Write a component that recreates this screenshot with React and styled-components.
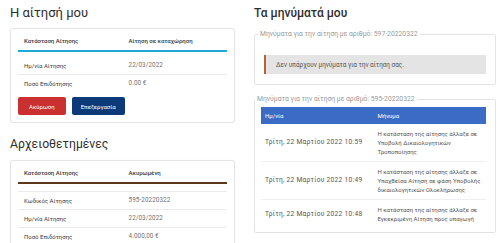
import React from "react";
import styled, { createGlobalStyle } from "styled-components";

const Global = createGlobalStyle`
  html, body { margin: 0; padding: 0; background: #fff; }
  body { width: 500px; height: 243px; overflow: hidden; font-family: Roboto, "Noto Sans", sans-serif; }
  * { box-sizing: border-box; }
`;

const Page = styled.div`
  display: grid;
  grid-template-columns: 225px 242px;
  column-gap: 19px;
  padding: 0 4px 0 10px;
  align-items: start;
`;

const Column = styled.section`
  display: flex;
  flex-direction: column;
`;

const Heading = styled.h2`
  margin: ${(p) => p.$mt || 4}px 0 ${(p) => p.$mb || 6}px;
  font-family: Roboto, sans-serif;
  font-size: ${(p) => p.$size || 13}px;
  line-height: 18px;
  font-weight: ${(p) => p.$weight || 400};
  color: #2e2e2e;
`;

const Card = styled.div`
  border: 1px solid #e4e4e4;
  border-radius: 3px;
  padding: 7px;
  background: #fff;
  box-shadow: 0 0 2px rgba(0, 0, 0, 0.04);
`;

const HeadRow = styled.div`
  display: grid;
  grid-template-columns: 1fr 1fr;
  border-bottom: 2px solid ${(p) => p.$accent};
  padding-bottom: 4px;
  margin-bottom: ${(p) => p.$gap}px;
  font-size: 6px;
  line-height: 10px;
  font-weight: 500;
  color: #3a3a3a;
`;

const Row = styled.div`
  display: grid;
  grid-template-columns: 1fr 1fr;
  align-items: center;
  height: 18px;
  border-top: ${(p) => (p.$ruled ? "1px solid #ececec" : "none")};
  font-size: 6px;
  line-height: 9px;
`;

const Label = styled.div`
  padding: 0 6px;
  color: #3a3a3a;
  font-weight: ${(p) => (p.$strong ? 500 : 400)};
`;

const Value = styled.div`
  padding: 0 6px;
  color: #727272;
  font-size: 6.3px;
  letter-spacing: 0.1px;
`;

const Actions = styled.div`
  display: flex;
  gap: 6px;
  margin-top: 5px;
`;

const Button = styled.button`
  height: 18px;
  padding: 0 ${(p) => p.$px}px;
  border: none;
  border-radius: 2px;
  background: ${(p) => p.$bg};
  color: #fff;
  font-family: Roboto, sans-serif;
  font-size: 6px;
  cursor: pointer;
`;

const Group = styled.fieldset`
  margin: ${(p) => p.$mt || 0}px 0 0;
  padding: ${(p) => p.$pad};
  border: 1px solid #e3e3e3;
  border-radius: 2px;
  min-width: 0;
`;

const Legend = styled.legend`
  margin-left: -6px;
  padding: 0 2px;
  font-size: 6.8px;
  line-height: 8px;
  color: #9a9a9a;
`;

const Alert = styled.div`
  height: 19px;
  display: flex;
  align-items: center;
  padding-left: 10px;
  background: #e4e4e4;
  border-left: 2px solid #b4642a;
  font-size: 6.4px;
  color: #555;
`;

const Table = styled.div`
  display: flex;
  flex-direction: column;
  font-size: 6px;
`;

const THead = styled.div`
  display: grid;
  grid-template-columns: 1fr 1fr;
  align-items: center;
  height: 17px;
  background: #3b6cc5;
  color: #fff;
  & > div { padding: 0 4px; }
`;

const TRow = styled.div`
  display: grid;
  grid-template-columns: 1fr 1fr;
  align-items: center;
  padding: 5px 0;
  border-top: ${(p) => (p.$ruled ? "1px solid #eeeeee" : "none")};
  line-height: 9px;
  color: #555;
  & > div { padding: 0 4px; }
`;

const DateCell = styled.div`
  font-size: 6.6px;
  letter-spacing: 0.3px;
`;

const Bottom = styled.div`
  height: 12px;
`;

const messages = [
  {
    date: "Τρίτη, 22 Μαρτίου 2022 10:59",
    text: "Η κατάσταση της αίτησης άλλαξε σε Υποβολή Δικαιολογητικών Τροποποίησης",
  },
  {
    date: "Τρίτη, 22 Μαρτίου 2022 10:49",
    text: "Η κατάσταση της αίτησης άλλαξε σε Υπαχθείσα Αίτηση σε φάση Υποβολής δικαιολογητικών Ολοκλήρωσης",
  },
  {
    date: "Τρίτη, 22 Μαρτίου 2022 10:48",
    text: "Η κατάσταση της αίτησης άλλαξε σε Εγκεκριμένη Αίτηση προς υπαγωγή",
  },
];

export default function App() {
  return (
    <>
      <Global />
      <Page>
        <Column>
          <Heading>Η αίτησή μου</Heading>
          <Card>
            <HeadRow $accent="#1ea8d6" $gap={4}>
              <Label $strong>Κατάσταση Αίτησης</Label>
              <Label $strong>Αίτηση σε καταχώρηση</Label>
            </HeadRow>
            <Row>
              <Label>Ημ/νία Αίτησης</Label>
              <Value>22/03/2022</Value>
            </Row>
            <Row $ruled>
              <Label>Ποσό Επιδότησης</Label>
              <Value>0.00 €</Value>
            </Row>
            <Actions>
              <Button $bg="#c9302f" $px={11}>Ακύρωση</Button>
              <Button $bg="#0c3a78" $px={9}>Επεξεργασία</Button>
            </Actions>
          </Card>

          <Heading $mt={12} $mb={7} $size={12.2}>Αρχειοθετημένες</Heading>
          <Card>
            <HeadRow $accent="#5a3819" $gap={7}>
              <Label $strong>Κατάσταση Αίτησης</Label>
              <Label $strong>Ακυρωμένη</Label>
            </HeadRow>
            <Row $ruled>
              <Label>Κωδικός Αίτησης</Label>
              <Value>595-20220322</Value>
            </Row>
            <Row $ruled>
              <Label>Ημ/νία Αίτησης</Label>
              <Value>22/03/2022</Value>
            </Row>
            <Row $ruled>
              <Label>Ποσό Επιδότησης</Label>
              <Value>4.000,00 €</Value>
            </Row>
            <Bottom />
          </Card>
        </Column>

        <Column>
          <Heading $weight={500} $mb={8} $size={12}>Τα μηνύματά μου</Heading>
          <Group $pad="17px 9px 10px">
            <Legend>Μηνύματα για την αίτηση με αριθμό: 597-20220322</Legend>
            <Alert>Δεν υπάρχουν μηνύματα για την αίτηση σας.</Alert>
          </Group>

          <Group $mt={10} $pad="4px 9px 4px 6px">
            <Legend>Μηνύματα για την αίτηση με αριθμό: 595-20220322</Legend>
            <Table>
              <THead>
                <div>Ημ/νία</div>
                <div>Μήνυμα</div>
              </THead>
              {messages.map((m, i) => (
                <TRow key={m.date} $ruled={i > 0}>
                  <DateCell>{m.date}</DateCell>
                  <div>{m.text}</div>
                </TRow>
              ))}
            </Table>
          </Group>

          <Group $mt={10} $pad="4px 9px 4px 6px">
            <Legend>Μηνύματα για την αίτηση με αριθμό: 594-20220322</Legend>
            <Bottom />
          </Group>
        </Column>
      </Page>
    </>
  );
}
